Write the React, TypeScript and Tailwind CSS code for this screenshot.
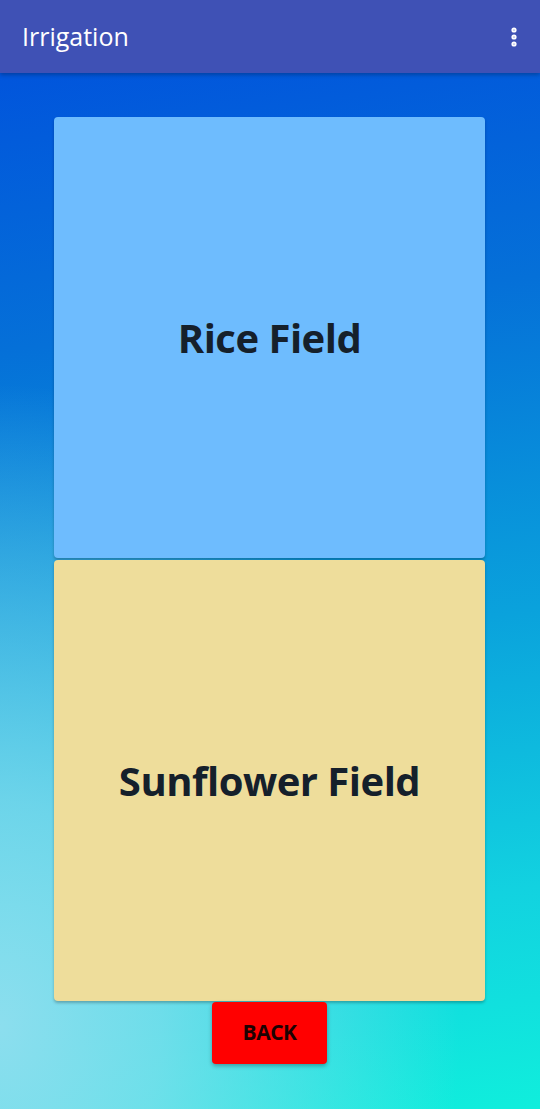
import { MoreVertical } from 'lucide-react';

const font = { fontFamily: '"Open Sans", "Noto Sans", sans-serif' };

function FieldCard({ label, bg }: { label: string; bg: string }) {
  return (
    <div className={`${bg} h-[441px] w-[431px] rounded-[4px] shadow-[0_2px_3px_rgba(0,0,0,0.25)] flex items-center justify-center`}>
      <span className="text-[40px] font-bold tracking-[-0.5px] text-[#15202b]">{label}</span>
    </div>
  );
}

export default function App() {
  return (
    <div className="w-[540px] h-[1109px] flex flex-col overflow-hidden" style={font}>
      <header className="h-[73px] bg-[#3f51b5] flex items-center justify-between pl-[22px] pr-[14px] shadow-[0_2px_4px_rgba(0,0,0,0.25)] z-10">
        <h1 className="text-[25px] text-white leading-none -mt-[1px]">Irrigation</h1>
        <MoreVertical className="w-[24px] h-[24px] text-white" strokeWidth={3.2} />
      </header>

      <main className="relative flex-1 bg-[linear-gradient(172deg,#0155dc_0%,#0570d8_25%,#0aa2dc_55%,#12d2e0_80%,#10eedc_100%)]">
        <div className="absolute inset-0 bg-[radial-gradient(ellipse_85%_62%_at_0%_92%,rgba(140,222,238,1)_0%,rgba(140,222,238,0.75)_35%,rgba(140,222,238,0)_100%)]" />
        <div className="relative flex flex-col items-center pt-[44px] pr-[1px]">
          <FieldCard label="Rice Field" bg="bg-[#6ebcfe]" />
          <div className="h-[2px]" />
          <FieldCard label="Sunflower Field" bg="bg-[#eedd9b]" />
          <button className="mt-[1px] w-[115px] h-[62px] bg-[#ff0000] rounded-[4px] shadow-[0_2px_4px_rgba(0,0,0,0.3)] flex items-center justify-center text-[21px] font-bold tracking-[-0.5px] text-[#1d0202]">
            BACK
          </button>
        </div>
      </main>
    </div>
  );
}
